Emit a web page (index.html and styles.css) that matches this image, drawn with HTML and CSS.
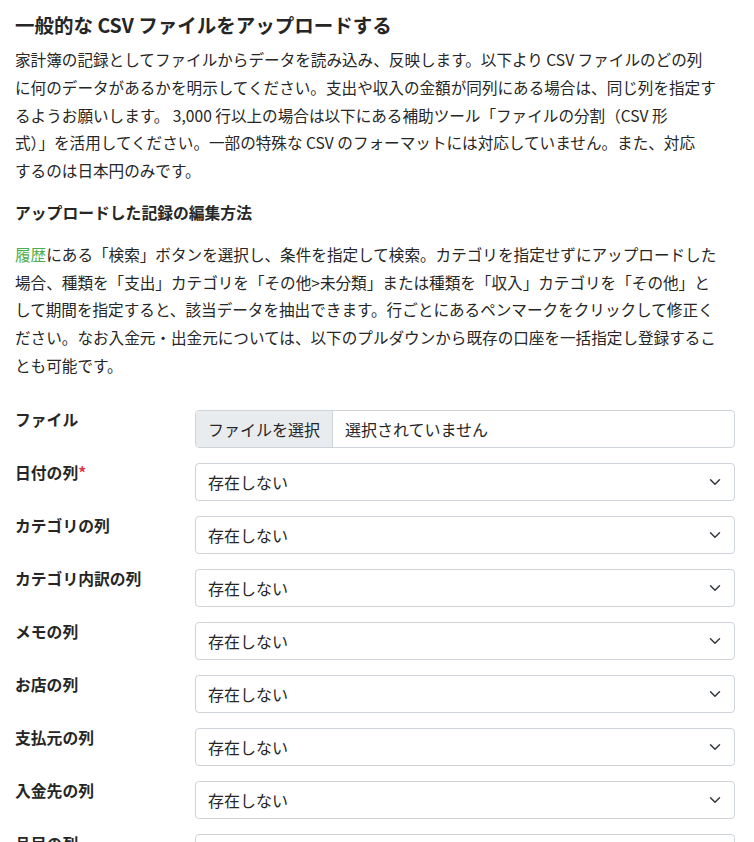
FILE: index.html
```html
<!doctype html>
<html lang="ja">
<head>
  <meta charset="utf-8">
  <meta name="viewport" content="width=device-width,initial-scale=1">
  <title>CSV アップロード</title>
  <link rel="stylesheet" href="styles.css">
</head>
<body>
  <div class="container">
    <h2>一般的な CSV ファイルをアップロードする</h2>
    <p>家計簿の記録としてファイルからデータを読み込み、反映します。以下より CSV ファイルのどの列<br>に何のデータがあるかを明示してください。支出や収入の金額が同列にある場合は、同じ列を指定す<br>るようお願いします。 3,000 行以上の場合は以下にある補助ツール「ファイルの分割（CSV 形<br>式）」を活用してください。一部の特殊な CSV のフォーマットには対応していません。また、対応<br>するのは日本円のみです。</p>

    <h3>アップロードした記録の編集方法</h3>
    <p><a href="#">履歴</a>にある「検索」ボタンを選択し、条件を指定して検索。カテゴリを指定せずにアップロードした<br>場合、種類を「支出」カテゴリを「その他&gt;未分類」または種類を「収入」カテゴリを「その他」と<br>して期間を指定すると、該当データを抽出できます。行ごとにあるペンマークをクリックして修正く<br>ださい。なお入金元・出金元については、以下のプルダウンから既存の口座を一括指定し登録するこ<br>とも可能です。</p>

    <form class="form">
      <div class="row">
        <label>ファイル</label>
        <div class="file">
          <span class="file-btn">ファイルを選択</span>
          <span class="file-name">選択されていません</span>
        </div>
      </div>
      <div class="row">
        <label>日付の列<span class="req">*</span></label>
        <div class="select"><span>存在しない</span><svg viewBox="0 0 16 16" width="12" height="12"><path d="M2 5l6 6 6-6" fill="none" stroke="#343a40" stroke-width="2" stroke-linecap="round" stroke-linejoin="round"/></svg></div>
      </div>
      <div class="row">
        <label>カテゴリの列</label>
        <div class="select"><span>存在しない</span><svg viewBox="0 0 16 16" width="12" height="12"><path d="M2 5l6 6 6-6" fill="none" stroke="#343a40" stroke-width="2" stroke-linecap="round" stroke-linejoin="round"/></svg></div>
      </div>
      <div class="row">
        <label>カテゴリ内訳の列</label>
        <div class="select"><span>存在しない</span><svg viewBox="0 0 16 16" width="12" height="12"><path d="M2 5l6 6 6-6" fill="none" stroke="#343a40" stroke-width="2" stroke-linecap="round" stroke-linejoin="round"/></svg></div>
      </div>
      <div class="row">
        <label>メモの列</label>
        <div class="select"><span>存在しない</span><svg viewBox="0 0 16 16" width="12" height="12"><path d="M2 5l6 6 6-6" fill="none" stroke="#343a40" stroke-width="2" stroke-linecap="round" stroke-linejoin="round"/></svg></div>
      </div>
      <div class="row">
        <label>お店の列</label>
        <div class="select"><span>存在しない</span><svg viewBox="0 0 16 16" width="12" height="12"><path d="M2 5l6 6 6-6" fill="none" stroke="#343a40" stroke-width="2" stroke-linecap="round" stroke-linejoin="round"/></svg></div>
      </div>
      <div class="row">
        <label>支払元の列</label>
        <div class="select"><span>存在しない</span><svg viewBox="0 0 16 16" width="12" height="12"><path d="M2 5l6 6 6-6" fill="none" stroke="#343a40" stroke-width="2" stroke-linecap="round" stroke-linejoin="round"/></svg></div>
      </div>
      <div class="row">
        <label>入金先の列</label>
        <div class="select"><span>存在しない</span><svg viewBox="0 0 16 16" width="12" height="12"><path d="M2 5l6 6 6-6" fill="none" stroke="#343a40" stroke-width="2" stroke-linecap="round" stroke-linejoin="round"/></svg></div>
      </div>
      <div class="row">
        <label>品目の列</label>
        <div class="select"><span>存在しない</span><svg viewBox="0 0 16 16" width="12" height="12"><path d="M2 5l6 6 6-6" fill="none" stroke="#343a40" stroke-width="2" stroke-linecap="round" stroke-linejoin="round"/></svg></div>
      </div>
    </form>
  </div>
</body>
</html>
```

FILE: styles.css
```css
body{margin:0;font-family:"Noto Sans CJK JP","Noto Sans",sans-serif;font-size:15.6px;color:#262626;background:#fff}
.container{padding:10px 19px 0 15px}
h2{margin:0 0 6px;font-size:19.5px;font-weight:700;line-height:30px}
h3{margin:15px 0 15px;font-size:15.8px;font-weight:700;line-height:26px}
p{margin:0;line-height:27.75px}
a{color:#4cae4c;text-decoration:none}
.form{margin-top:30px}
.row{display:flex;margin-bottom:15px}
.row label{width:180px;flex:none;font-weight:700;font-size:15.8px;line-height:20px}
.req{color:#dc3545}
.file,.select{flex:1;height:38px;box-sizing:border-box;border:1px solid #ced4da;border-radius:4px;display:flex;align-items:center;overflow:hidden;font-size:16px}
.file-btn{height:100%;display:flex;align-items:center;padding:0 12px;background:#e9ecef;border-right:1px solid #ced4da}
.file-name{padding:0 12px}
.select{justify-content:space-between;padding:0 13px 0 12px}
```
